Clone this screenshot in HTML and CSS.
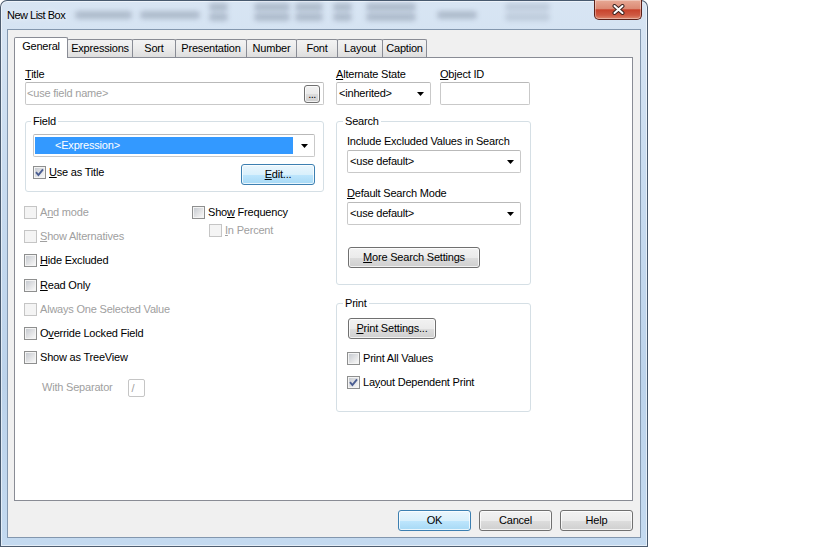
FILE: index.html
```html
<!DOCTYPE html>
<html lang="en">
<head>
<meta charset="utf-8">
<title>New List Box</title>
<link rel="stylesheet" href="styles.css">
</head>
<body>
<div class="window">
  <div class="titlebar">
    <div class="title">New List Box</div>
    <div class="glass" aria-hidden="true">
      <div class="blob b1"><i></i></div>
      <div class="blob b2"><i></i></div>
      <div class="blob b3"><i></i><i></i></div>
      <div class="blob b4"><i></i><i></i></div>
      <div class="blob b5"><i></i><i></i></div>
      <div class="blob b6"><i></i><i></i></div>
      <div class="blob b7"><i></i><i></i></div>
      <div class="blob b8"><i></i></div>
      <div class="blob b9"><i></i><i></i></div>
    </div>
    <div class="close">
      <svg width="13" height="11" viewBox="0 0 13 11"><path d="M2.5 2 L10.5 9 M10.5 2 L2.5 9" stroke="#3b2320" stroke-width="4" stroke-linecap="round"/><path d="M2.5 2 L10.5 9 M10.5 2 L2.5 9" stroke="#ffffff" stroke-width="2" stroke-linecap="round"/></svg>
    </div>
  </div>

  <div class="client">
    <div class="tabs">
      <div class="tab active t1">General</div>
      <div class="tab t2">Expressions</div>
      <div class="tab t3">Sort</div>
      <div class="tab t4">Presentation</div>
      <div class="tab t5">Number</div>
      <div class="tab t6">Font</div>
      <div class="tab t7">Layout</div>
      <div class="tab t8">Caption</div>
    </div>

    <div class="panel">
      <div class="col-left">
        <div class="lbl"><u>T</u>itle</div>
        <div class="textbox title-box">
          <span class="placeholder">&lt;use field name&gt;</span>
          <span class="dots">...</span>
        </div>

        <fieldset class="group field-group">
          <legend>Field</legend>
          <div class="combo field-combo">
            <span class="sel">&lt;Expression&gt;</span>
            <svg class="arrow" width="7" height="4" viewBox="0 0 7 4"><path d="M0 0H7L3.5 4Z" fill="#000"/></svg>
          </div>
          <div class="field-row">
            <div class="check use-title">
              <span class="cb checked"><svg width="11" height="11" viewBox="0 0 11 11"><path d="M2 5.2 L4.4 8 L9 2.3" fill="none" stroke="#4a5d92" stroke-width="1.9"/></svg></span>
              <span><u>U</u>se as Title</span>
            </div>
            <button type="button" class="btn default edit"><u>E</u>dit...</button>
          </div>
        </fieldset>

        <div class="options">
          <div class="opt-main">
            <div class="check disabled"><span class="cb"></span><span>A<u>n</u>d mode</span></div>
            <div class="check disabled"><span class="cb"></span><span><u>S</u>how Alternatives</span></div>
            <div class="check"><span class="cb"></span><span><u>H</u>ide Excluded</span></div>
            <div class="check"><span class="cb"></span><span><u>R</u>ead Only</span></div>
            <div class="check disabled"><span class="cb"></span><span>Always One Selected Value</span></div>
            <div class="check"><span class="cb"></span><span>O<u>v</u>erride Locked Field</span></div>
            <div class="check"><span class="cb"></span><span>Show as TreeView</span></div>
            <div class="sep-row">
              <span>With Separator</span>
              <span class="sep-box">/</span>
            </div>
          </div>
          <div class="opt-freq">
            <div class="check"><span class="cb"></span><span>Sho<u>w</u> Frequency</span></div>
            <div class="check disabled indent"><span class="cb"></span><span><u>I</u>n Percent</span></div>
          </div>
        </div>
      </div>

      <div class="col-right">
        <div class="top-row">
          <div class="alt">
            <div class="lbl"><u>A</u>lternate State</div>
            <div class="combo">
              <span class="val">&lt;inherited&gt;</span>
              <svg class="arrow" width="7" height="4" viewBox="0 0 7 4"><path d="M0 0H7L3.5 4Z" fill="#000"/></svg>
            </div>
          </div>
          <div class="oid">
            <div class="lbl"><u>O</u>bject ID</div>
            <div class="textbox oid-box"></div>
          </div>
        </div>

        <fieldset class="group rgroup search">
          <legend>Search</legend>
          <div class="lbl">Include Excluded Values in Search</div>
          <div class="combo wide">
            <span class="val">&lt;use default&gt;</span>
            <svg class="arrow" width="7" height="4" viewBox="0 0 7 4"><path d="M0 0H7L3.5 4Z" fill="#000"/></svg>
          </div>
          <div class="lbl second"><u>D</u>efault Search Mode</div>
          <div class="combo wide">
            <span class="val">&lt;use default&gt;</span>
            <svg class="arrow" width="7" height="4" viewBox="0 0 7 4"><path d="M0 0H7L3.5 4Z" fill="#000"/></svg>
          </div>
          <button type="button" class="btn more"><u>M</u>ore Search Settings</button>
        </fieldset>

        <fieldset class="group rgroup print">
          <legend>Print</legend>
          <button type="button" class="btn print-btn"><u>P</u>rint Settings...</button>
          <div class="print-checks">
            <div class="check"><span class="cb"></span><span>Print All Values</span></div>
            <div class="check"><span class="cb checked"><svg width="11" height="11" viewBox="0 0 11 11"><path d="M2 5.2 L4.4 8 L9 2.3" fill="none" stroke="#4a5d92" stroke-width="1.9"/></svg></span><span>La<u>y</u>out Dependent Print</span></div>
          </div>
        </fieldset>
      </div>
    </div>

    <div class="actions">
      <button type="button" class="btn default">OK</button>
      <button type="button" class="btn">Cancel</button>
      <button type="button" class="btn">Help</button>
    </div>
  </div>
</div>
</body>
</html>
```

FILE: styles.css
```css
* { box-sizing: border-box; }

html, body { margin: 0; padding: 0; }

body {
  width: 819px;
  height: 547px;
  overflow: hidden;
  background: #ffffff;
  font-family: "Liberation Sans", Arial, sans-serif;
  font-size: 11px;
  line-height: 13px;
  letter-spacing: -0.2px;
  color: #000;
}

u { text-decoration: underline; text-underline-offset: 1px; }

/* ---------- window frame ---------- */
.window {
  width: 648px;
  height: 547px;
  display: flex;
  flex-direction: column;
  border: 1px solid rgba(20, 35, 55, 0.7);
  border-radius: 7px 7px 0 0;
  background: linear-gradient(180deg, #d8e5f3 0%, #c9dcf0 30%, #bcd3eb 70%, #c4daf0 100%);
  box-shadow: inset 0 0 0 1px rgba(255, 255, 255, 0.55);
}

.titlebar {
  height: 28px;
  display: flex;
  align-items: flex-start;
  padding-left: 6px;
}

.title {
  width: 60px;
  margin-top: 8px;
  font-size: 11px;
  letter-spacing: -0.5px;
  white-space: nowrap;
  color: #000;
  text-shadow: 0 0 6px rgba(255, 255, 255, 0.9);
}

.glass { display: flex; align-items: flex-start; }
.blob { display: flex; flex-direction: column; gap: 2px; margin-top: 2px; }
.blob i {
  display: block;
  height: 8px;
  border-radius: 4px;
  background: rgba(60, 72, 95, 0.26);
  filter: blur(2.5px);
}
.b1, .b2, .b8 { margin-top: 10px; }
.b1 { width: 57px; margin-left: 8px; }
.b2 { width: 60px; margin-left: 8px; }
.b3 { width: 19px; margin-left: 9px; }
.b4 { width: 36px; margin-left: 26px; }
.b5 { width: 28px; margin-left: 5px; }
.b6 { width: 19px; margin-left: 10px; }
.b7 { width: 50px; margin-left: 14px; }
.b8 { width: 40px; margin-left: 21px; }
.b9 { width: 45px; margin-left: 28px; opacity: 0.6; }

.close {
  margin-left: auto;
  margin-right: 5px;
  margin-top: -1px;
  width: 48px;
  height: 20px;
  display: flex;
  align-items: center;
  justify-content: center;
  border: 1px solid #5c2018;
  border-top: none;
  border-radius: 0 0 5px 5px;
  background: linear-gradient(180deg, #e7a995 0%, #dc8a74 45%, #c8432c 52%, #cf5a43 80%, #de8a6f 100%);
  box-shadow: inset 0 0 0 1px rgba(255, 255, 255, 0.35);
}

/* ---------- client ---------- */
.client {
  flex: 1;
  margin: 0 6px 8px 6px;
  border: 1px solid #8397ae;
  background: #f0f0f0;
  padding: 7px 7px 6px 6px;
  display: flex;
  flex-direction: column;
}

.tabs {
  display: flex;
  align-items: flex-end;
  height: 21px;
}

.tab {
  height: 18px;
  margin-bottom: 1px;
  margin-left: -1px;
  border: 1px solid #898c95;
  border-bottom: none;
  border-radius: 2px 2px 0 0;
  background: linear-gradient(180deg, #f3f3f3 0%, #ebebeb 50%, #dedede 100%);
  padding-top: 2px;
  text-align: center;
  white-space: nowrap;
}
.tab.active {
  position: relative;
  z-index: 2;
  height: 21px;
  margin-bottom: 0;
  margin-left: 0;
  background: #ffffff;
}
.t1 { width: 54px; }
.t2 { width: 66px; }
.t3 { width: 44px; }
.t4 { width: 72px; }
.t5 { width: 51px; }
.t6 { width: 42px; }
.t7 { width: 46px; }
.t8 { width: 45px; }

.panel {
  flex: 1;
  margin-top: -1px;
  background: #ffffff;
  border: 1px solid #898c95;
  display: flex;
  gap: 12px;
  padding: 10px 0 0 10px;
}

.col-left { width: 299px; }
.col-right { width: 195px; }

.lbl { height: 13px; white-space: nowrap; }

/* ---------- inputs ---------- */
.textbox {
  margin-top: 1px;
  height: 23px;
  border: 1px solid #c9c9c9;
  border-top-color: #b9b9b9;
  border-radius: 2px;
  background: #fff;
  display: flex;
  align-items: center;
  padding: 0 3px 0 1px;
}
.placeholder { flex: 1; color: #a0a0a0; }
.dots {
  width: 16px;
  height: 18px;
  border: 1px solid #707070;
  border-radius: 3px;
  background: linear-gradient(180deg, #f2f2f2 0%, #ebebeb 50%, #dddddd 51%, #cfcfcf 100%);
  box-shadow: inset 0 0 0 1px rgba(255, 255, 255, 0.7);
  text-align: center;
  line-height: 17px;
  letter-spacing: -0.5px;
}

.combo {
  margin-top: 1px;
  height: 23px;
  border: 1px solid #c9c9c9;
  border-top-color: #b9b9b9;
  border-radius: 2px;
  background: #fff;
  display: flex;
  align-items: center;
  padding: 0 6px 0 2px;
}
.combo .val { flex: 1; white-space: nowrap; }
.arrow { flex: none; }

.field-combo { margin-top: 0; padding: 2px 6px 2px 1px; align-items: stretch; }
.field-combo .sel {
  flex: 1;
  margin-right: 8px;
  background: #3399ff;
  color: #fff;
  padding-left: 20px;
  display: flex;
  align-items: center;
}
.field-combo .arrow { align-self: center; }

.oid-box { width: 90px; }

/* ---------- group boxes ---------- */
.group {
  margin: 10px 0 0 0;
  min-width: 0;
  border: 1px solid #d5dfe5;
  border-radius: 3px;
}
.group legend { padding: 0 2px; line-height: 13px; }

.field-group { padding: 6px 8px 6px 7px; }
.field-group legend { margin-left: -2px; }

.field-row {
  margin-top: 6px;
  height: 22px;
  display: flex;
  justify-content: space-between;
  align-items: flex-start;
}
.use-title { margin-top: 3px; }

/* ---------- checkboxes ---------- */
.check {
  display: flex;
  align-items: center;
  gap: 3px;
  white-space: nowrap;
}
.check.disabled { color: #a0a0a0; }

.cb {
  flex: none;
  width: 13px;
  height: 13px;
  border: 1px solid #8e8f8f;
  background: #f4f4f4;
  display: grid;
  padding: 1px;
}
.cb::before {
  content: "";
  grid-area: 1 / 1;
  background: linear-gradient(135deg, #c7cbd1 0%, #e2e3e5 55%, #f7f7f7 100%);
}
.cb svg { grid-area: 1 / 1; margin: -1px; }
.disabled .cb { border-color: #c5c5c5; }
.disabled .cb::before { background: #f4f4f4; }

.options { display: flex; margin-top: 8px; margin-left: -1px; }
.opt-main { width: 168px; }
.opt-main .check { height: 24.3px; }
.opt-freq { padding-top: 3px; }
.opt-freq .check { height: 18px; }
.opt-freq .indent { margin-left: 17px; }

.sep-row {
  margin-top: 9px;
  height: 17px;
  display: flex;
  align-items: center;
  padding-left: 18px;
  color: #a0a0a0;
  white-space: nowrap;
}
.sep-box {
  width: 17px;
  height: 18px;
  margin-left: 15px;
  border: 1px solid #c5c5c5;
  border-radius: 2px;
  padding-left: 3px;
  line-height: 16px;
}

/* ---------- right column ---------- */
.top-row { display: flex; gap: 9px; }
.alt { width: 95px; }
.oid { width: 90px; }

.rgroup { padding: 7px 9px 16px 10px; }
.rgroup legend { margin-left: -4px; }
.rgroup .combo { margin-top: 2px; }
.rgroup .lbl.second { margin-top: 14px; }

.print { margin-top: 12px; padding-top: 8px; padding-bottom: 17px; }
.print-checks { margin-top: 7px; }
.print-checks .check { height: 24px; }

/* ---------- buttons ---------- */
.btn {
  height: 21px;
  padding: 0;
  font: inherit;
  letter-spacing: inherit;
  color: #000;
  border: 1px solid #707070;
  border-radius: 3px;
  background: linear-gradient(180deg, #f2f2f2 0%, #ebebeb 50%, #dddddd 51%, #cfcfcf 100%);
  box-shadow: inset 0 0 0 1px rgba(255, 255, 255, 0.75);
  display: flex;
  align-items: center;
  justify-content: center;
  white-space: nowrap;
}
.btn.default {
  border-color: #3c7fb1;
  background: linear-gradient(180deg, #eaf6fd 0%, #d9f0fc 50%, #bee6fd 51%, #a7d9f5 100%);
}
.edit { width: 74px; margin-top: 1px; }
.more { width: 132px; margin-top: 22px; margin-left: 1px; }
.print-btn { width: 88px; margin-left: 1px; }

.actions {
  margin-top: 9px;
  display: flex;
  justify-content: flex-end;
  gap: 8px;
}
.actions .btn { width: 73px; }
```
